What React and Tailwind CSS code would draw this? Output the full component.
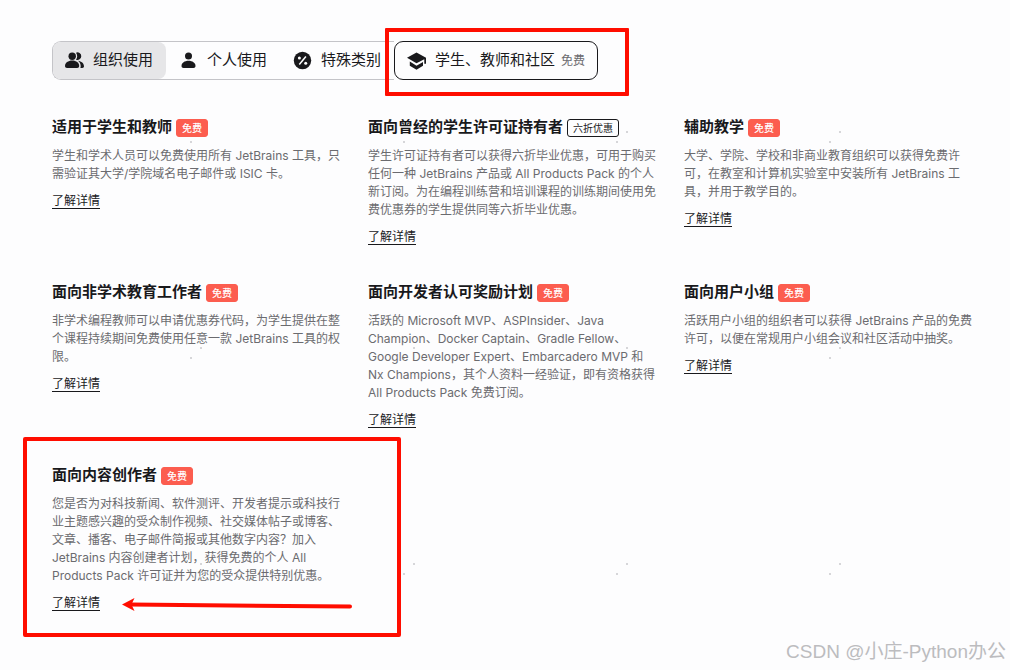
import React, { useState } from 'react';
import clsx from 'clsx';

const UsersIcon = () => (
    <svg viewBox="0 0 20 20" className="w-5 h-5 shrink-0" fill="currentColor" aria-hidden="true">
        <circle cx="7.200" cy="5.200" r="3.700" />
        <path d="M0 15c0-3 3.200-5.400 7.200-5.400s7 2.400 7 5.400c0 1.300-.9 1.900-2 1.900H2c-1.200 0-2-.6-2-1.900z" />
        <path d="M11 1.700a3.800 3.800 0 1 1 0 7c.8-1 1.200-2.200 1.200-3.500s-.4-2.500-1.200-3.500z" />
        <path d="M13 9.800c3.400.4 6 2.700 6 5.400 0 1.200-.7 1.700-1.700 1.700h-1.900c.2-.6.3-1.200.3-1.900 0-2-1-3.900-2.700-5.200z" />
    </svg>
);

const UserIcon = () => (
    <svg viewBox="0 0 20 20" className="w-5 h-5 shrink-0" fill="currentColor" aria-hidden="true">
        <circle cx="9.500" cy="5" r="3.500" />
        <path d="M2.500 15c0-3 3.100-5.200 7-5.200s7 2.200 7 5.200c0 1.300-.8 1.900-2 1.900h-10c-1.200 0-2-.6-2-1.900z" />
    </svg>
);

const PercentIcon = () => (
    <svg viewBox="0 0 20 20" className="w-5 h-5 shrink-0" aria-hidden="true">
        <circle cx="9.500" cy="9.500" r="8.700" fill="currentColor" />
        <path d="M6.300 13.500l6.600-8" stroke="#fff" strokeWidth="1.500" />
        <circle cx="6.400" cy="7" r="1.500" fill="#fff" />
        <circle cx="12.700" cy="12.200" r="1.500" fill="#fff" />
    </svg>
);

const CapIcon = () => (
    <svg viewBox="0 0 20 20" className="w-5 h-5 shrink-0" fill="currentColor" aria-hidden="true">
        <path d="M9.500 1.500L19 6.800v6h-1.700V8.300L9.500 12.300 0 6.800z" />
        <path d="M2.800 10.500l6.700 4.200 6.500-3.600v3.700l-6.500 3.900-6.700-3.900z" />
    </svg>
);

const TABS = [
    { id: 'org', label: '组织使用', icon: UsersIcon },
    { id: 'personal', label: '个人使用', icon: UserIcon },
    { id: 'special', label: '特殊类别', icon: PercentIcon },
];

const OFFERS = [
    {
        title: '适用于学生和教师',
        badge: '免费',
        text: '学生和学术人员可以免费使用所有 JetBrains 工具，只需验证其大学/学院域名电子邮件或 ISIC 卡。',
    },
    {
        title: '面向曾经的学生许可证持有者',
        badge: '六折优惠',
        outline: true,
        text: '学生许可证持有者可以获得六折毕业优惠，可用于购买任何一种 JetBrains 产品或 All Products Pack 的个人新订阅。为在编程训练营和培训课程的训练期间使用免费优惠券的学生提供同等六折毕业优惠。',
    },
    {
        title: '辅助教学',
        badge: '免费',
        text: '大学、学院、学校和非商业教育组织可以获得免费许可，在教室和计算机实验室中安装所有 JetBrains 工具，并用于教学目的。',
    },
    {
        title: '面向非学术教育工作者',
        badge: '免费',
        text: '非学术编程教师可以申请优惠券代码，为学生提供在整个课程持续期间免费使用任意一款 JetBrains 工具的权限。',
    },
    {
        title: '面向开发者认可奖励计划',
        badge: '免费',
        text: '活跃的 Microsoft MVP、ASPInsider、Java Champion、Docker Captain、Gradle Fellow、Google Developer Expert、Embarcadero MVP 和 Nx Champions，其个人资料一经验证，即有资格获得 All Products Pack 免费订阅。',
    },
    {
        title: '面向用户小组',
        badge: '免费',
        text: '活跃用户小组的组织者可以获得 JetBrains 产品的免费许可，以便在常规用户小组会议和社区活动中抽奖。',
    },
    {
        title: '面向内容创作者',
        badge: '免费',
        marked: true,
        text: '您是否为对科技新闻、软件测评、开发者提示或科技行业主题感兴趣的受众制作视频、社交媒体帖子或博客、文章、播客、电子邮件简报或其他数字内容？加入 JetBrains 内容创建者计划，获得免费的个人 All Products Pack 许可证并为您的受众提供特别优惠。',
    },
];

const Offer = ({ title, badge, outline, marked, text }) => (
    <article className="relative">
        <div className="flex items-center gap-1 h-6">
            <h2 className="text-[15px] leading-6 font-bold whitespace-nowrap">{title}</h2>
            <span
                className={clsx(
                    'mt-[2px] px-[5px] rounded-[3px] border text-[10px] leading-4 whitespace-nowrap',
                    outline ? 'border-[#19191c]' : 'border-[#fc5d4f] bg-[#fc5d4f] text-white font-medium'
                )}
            >
                {badge}
            </span>
        </div>
        <p className="mt-2 text-xs leading-[18px] text-[#6b6b6f]">{text}</p>
        <div className="mt-[11px] flex">
            <a href="#details" className="relative block text-xs leading-[14px] border-b border-[#19191c]">
                了解详情
                {marked && (
                    <svg
                        viewBox="0 0 232 16"
                        className="absolute left-[70px] top-0 w-[232px] max-w-none h-4 pointer-events-none"
                        aria-hidden="true"
                    >
                        <path d="M8 8.500L228 10.500" stroke="#ff0d00" strokeWidth="4" strokeLinecap="round" />
                        <path d="M0 8.500L12.500 2 9.500 8.500l3 6.500z" fill="#ff0d00" />
                    </svg>
                )}
            </a>
        </div>
        {marked && (
            <div className="absolute -left-[29px] -right-[57px] -top-[26px] -bottom-[26px] border-4 border-[#ff0d00] rounded-[2px] pointer-events-none" />
        )}
    </article>
);

const App = () => {
    const [active, setActive] = useState('org');

    return (
        <main className="relative min-h-screen overflow-hidden bg-[#fdfdfe] bg-[radial-gradient(circle_at_201px_132px,#d6d6d9_1px,transparent_1px),radial-gradient(circle_at_191px_142px,#d6d6d9_1px,transparent_1px)] bg-[length:213px_216px] pt-[41px] pl-[52px] pr-[34px] pb-14 text-[#19191c] font-['Inter','Noto_Sans_CJK_SC',sans-serif]">
            <nav className="flex text-[15px]">
                <div className="flex gap-px h-[39px] border border-r-0 border-[#c4c4c8] rounded-l-[9px]">
                    {TABS.map(({ id, label, icon: Icon }) => (
                        <button
                            key={id}
                            type="button"
                            onClick={() => setActive(id)}
                            className={clsx(
                                'flex items-center gap-2 pl-3 pr-[13px] rounded-[8px] whitespace-nowrap',
                                active === id && 'bg-[#e6e6e8]'
                            )}
                        >
                            <Icon />
                            {label}
                        </button>
                    ))}
                </div>
                <div className="relative">
                    <button
                        type="button"
                        className="flex items-center gap-2 h-[39px] px-3 border border-[#19191c] rounded-[9px] whitespace-nowrap"
                    >
                        <CapIcon />
                        <span className="flex items-center gap-[6px]">
                            学生、教师和社区
                            <span className="text-xs text-[#6b6b6f]">免费</span>
                        </span>
                    </button>
                    <div className="absolute -left-[9px] -right-[31px] -top-[13px] -bottom-4 border-4 border-[#ff0d00] rounded-[1px] pointer-events-none" />
                </div>
            </nav>

            <section className="mt-[35px] grid grid-cols-3 gap-x-6 gap-y-[35px] items-start">
                {OFFERS.map((offer) => (
                    <Offer key={offer.title} {...offer} />
                ))}
            </section>

            <div className="absolute right-1 bottom-1 text-[19px] leading-7 text-[#bcbcbf] font-['Liberation_Sans','Noto_Sans_CJK_SC',sans-serif] whitespace-nowrap">
                CSDN @小庄-Python办公
            </div>
        </main>
    );
};

export default App;
